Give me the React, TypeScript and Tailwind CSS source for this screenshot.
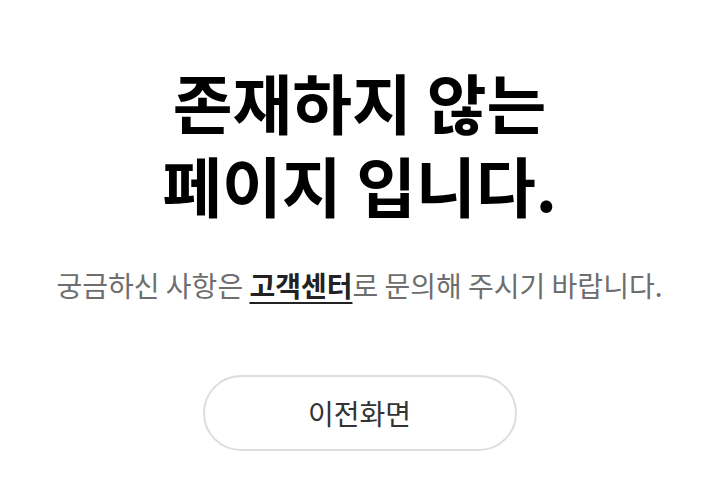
export default function App() {
  return (
    <div
      className="flex min-h-[498px] w-full flex-col items-center bg-white pt-[60px]"
      style={{ fontFamily: '"Noto Sans CJK KR", "Noto Sans", sans-serif' }}
    >
      <h1 className="text-center text-[65px] font-bold leading-[83px] text-black">
        존재하지 않는
        <br />
        페이지 입니다.
      </h1>
      <p className="mt-[39px] text-center text-[28px] leading-[40px] text-[#6e6e6e]">
        궁금하신 사항은{' '}
        <a href="#" className="font-bold text-[#222222] underline decoration-2 underline-offset-[5px]">
          고객센터
        </a>
        로 문의해 주시기 바랍니다.
      </p>
      <button
        type="button"
        className="mt-[70px] h-[76px] w-[314px] rounded-full border-2 border-[#dddddd] bg-white text-[28px] text-[#333333]"
      >
        이전화면
      </button>
    </div>
  );
}
